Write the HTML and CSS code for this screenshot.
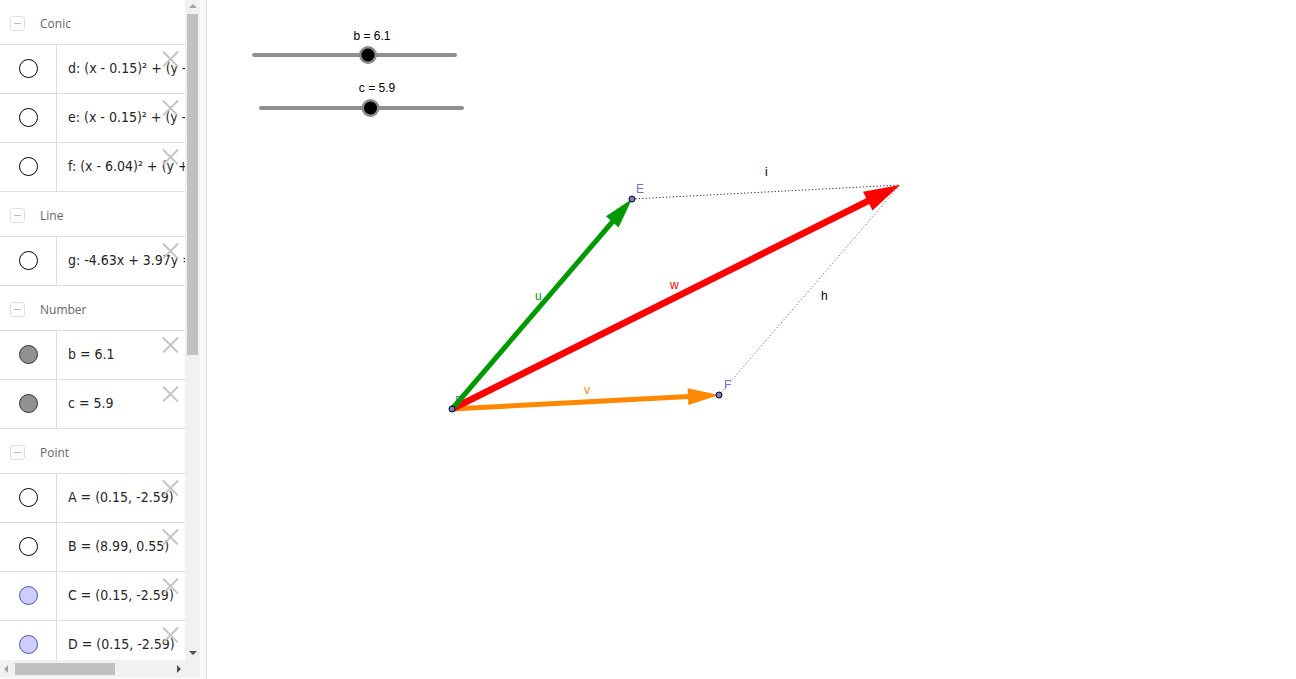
FILE: index.html
```html
<!DOCTYPE html>
<html>
<head>
<meta charset="utf-8">
<link rel="stylesheet" href="styles.css">
</head>
<body>
<div class="app">
  <div class="left">
    <div class="algebra-col">
      <div class="main">
        <div class="list">
          <div class="group"><span class="collapse"></span><span class="gname">Conic</span></div>
          <div class="item"><div class="mark"><span class="dot empty"></span></div><div class="expr">d: (x - 0.15)² + (y - 2.59)² = 10</div><span class="del"></span></div>
          <div class="item"><div class="mark"><span class="dot empty"></span></div><div class="expr">e: (x - 0.15)² + (y - 2.59)² = 10</div><span class="del"></span></div>
          <div class="item"><div class="mark"><span class="dot empty"></span></div><div class="expr">f: (x - 6.04)² + (y + 2.59)² = 10</div><span class="del"></span></div>
          <div class="group"><span class="collapse"></span><span class="gname">Line</span></div>
          <div class="item"><div class="mark"><span class="dot empty"></span></div><div class="expr">g: -4.63x + 3.97y = -11</div><span class="del"></span></div>
          <div class="group"><span class="collapse"></span><span class="gname">Number</span></div>
          <div class="item"><div class="mark"><span class="dot grey"></span></div><div class="expr">b = 6.1</div><span class="del"></span></div>
          <div class="item"><div class="mark"><span class="dot grey"></span></div><div class="expr">c = 5.9</div><span class="del"></span></div>
          <div class="group"><span class="collapse"></span><span class="gname">Point</span></div>
          <div class="item"><div class="mark"><span class="dot empty"></span></div><div class="expr">A = (0.15, -2.59)</div><span class="del"></span></div>
          <div class="item"><div class="mark"><span class="dot empty"></span></div><div class="expr">B = (8.99, 0.55)</div><span class="del"></span></div>
          <div class="item"><div class="mark"><span class="dot blue"></span></div><div class="expr">C = (0.15, -2.59)</div><span class="del"></span></div>
          <div class="item"><div class="mark"><span class="dot blue"></span></div><div class="expr">D = (0.15, -2.59)</div><span class="del"></span></div>
        </div>
        <div class="vscroll">
          <div class="arrow up"></div>
          <div class="vtrack"><div class="vthumb"></div></div>
          <div class="arrow down"></div>
        </div>
      </div>
      <div class="hrow">
        <div class="hscroll">
          <div class="arrow lefta"></div>
          <div class="htrack"><div class="hthumb"></div></div>
          <div class="arrow righta"></div>
        </div>
        <div class="corner"></div>
      </div>
    </div>
  </div>
  <div class="graphics">
    <svg class="canvas" width="1089" height="679" viewBox="207 0 1089 679">
      <!-- sliders -->
      <text class="slabel" x="372" y="40" text-anchor="middle">b = 6.1</text>
      <line x1="254" y1="55" x2="455" y2="55" class="sline"/>
      <circle cx="368" cy="55" r="9" fill="#8a8a8a"/>
      <circle cx="368" cy="55" r="6.5" fill="#000"/>
      <text class="slabel" x="377" y="92" text-anchor="middle">c = 5.9</text>
      <line x1="261" y1="108" x2="462" y2="108" class="sline"/>
      <circle cx="370.5" cy="108" r="9" fill="#8a8a8a"/>
      <circle cx="370.5" cy="108" r="6.5" fill="#000"/>

      <!-- D label -->
      <text class="plabel" x="455" y="405">D</text>

      <!-- dotted lines -->
      <line x1="632" y1="199" x2="900" y2="185" stroke="#222" stroke-width="1" stroke-dasharray="1.2 2.2"/>
      <line x1="719" y1="395" x2="900" y2="185" stroke="#666" stroke-width="1" stroke-dasharray="1.2 2.2"/>

      <!-- v orange -->
      <line x1="452" y1="409" x2="689" y2="396.5" stroke="#ff8800" stroke-width="5"/>
      <polygon points="719,395 688.4,405 687.6,388.3" fill="#ff8800"/>
      <!-- w red -->
      <line x1="452" y1="409" x2="869" y2="200.5" stroke="#ff0000" stroke-width="6.5"/>
      <polygon points="900,185 872.5,210.5 863,191.8" fill="#ff0000"/>
      <!-- u green -->
      <line x1="452" y1="409" x2="614" y2="220" stroke="#009900" stroke-width="5"/>
      <polygon points="632,199 618.6,227.5 606,216.3" fill="#009900"/>

      <!-- points -->
      <circle cx="452" cy="409" r="3" fill="#7b7bd6" stroke="#000" stroke-width="1"/>
      <circle cx="632" cy="199" r="3" fill="#7b7bd6" stroke="#000" stroke-width="1"/>
      <circle cx="719" cy="395" r="3" fill="#7b7bd6" stroke="#000" stroke-width="1"/>

      <!-- labels -->
      <text class="plabel" x="636" y="193">E</text>
      <text class="plabel" x="724" y="389">F</text>
      <text class="vlabel lbl-black" x="765" y="176">i</text>
      <text class="vlabel lbl-black" x="821" y="300">h</text>
      <text class="vlabel lbl-green" x="535" y="300">u</text>
      <text class="vlabel lbl-red" x="670" y="289">w</text>
      <text class="vlabel lbl-orange" x="584" y="394">v</text>
    </svg>
  </div>
</div>
</body>
</html>
```

FILE: styles.css
```css
html, body {
  margin: 0;
  padding: 0;
  background: #fff;
  overflow: hidden;
}
.app {
  display: flex;
  width: 1296px;
  height: 679px;
}
.left {
  width: 206px;
  height: 679px;
  background: #f8f8f8;
  border-right: 1px solid #dcdcdc;
  flex: none;
}
.algebra-col {
  width: 200px;
  height: 679px;
  display: flex;
  flex-direction: column;
}
.main {
  flex: 1;
  display: flex;
  min-height: 0;
}
.list {
  width: 185px;
  background: #fff;
  overflow: hidden;
  flex: none;
}
.group {
  height: 44px;
  border-bottom: 1px solid #dddddd;
  display: flex;
  align-items: center;
  box-sizing: content-box;
}
.collapse {
  width: 13px;
  height: 13px;
  border: 1px solid #dedede;
  border-radius: 3px;
  margin-left: 10px;
  margin-right: 15px;
  position: relative;
  margin-top: 2px;
}
.collapse::after {
  content: "";
  position: absolute;
  left: 3px;
  top: 6px;
  width: 7px;
  height: 1px;
  background: #b8b8b8;
}
.gname {
  font-family: "Open Sans", sans-serif;
  font-size: 12px;
  color: #666;
  margin-top: 2px;
}
.item {
  height: 48px;
  border-bottom: 1px solid #dddddd;
  display: flex;
  position: relative;
}
.mark {
  width: 56px;
  border-right: 1px solid #dddddd;
  display: flex;
  align-items: center;
  justify-content: center;
  flex: none;
}
.dot {
  width: 17px;
  height: 17px;
  border-radius: 50%;
  border: 1px solid #000;
  margin-left: 1px;
  margin-bottom: 1px;
}
.dot.empty { background: #fff; }
.dot.grey { background: #919191; border-color: #333; }
.dot.blue { background: #ccccff; border-color: #5050b0; }
.expr {
  padding-left: 11px;
  padding-bottom: 3px;
  display: flex;
  align-items: center;
  white-space: nowrap;
  font-family: "DejaVu Sans", sans-serif;
  font-stretch: condensed;
  font-size: 14px;
  color: #262626;
}
.del {
  position: absolute;
  right: 6px;
  top: 5px;
  width: 17px;
  height: 17px;
}
.del::before, .del::after {
  content: "";
  position: absolute;
  left: -2px;
  top: 8px;
  width: 21px;
  height: 1.5px;
  background: #c4c4c4;
  transform: rotate(45deg);
}
.del::after { transform: rotate(-45deg); }

.vscroll {
  width: 15px;
  background: #f1f1f1;
  display: flex;
  flex-direction: column;
  flex: none;
}
.arrow {
  position: relative;
  flex: none;
}
.arrow.up, .arrow.down { height: 14px; }
.arrow.up::after {
  content: "";
  position: absolute;
  left: 4px;
  top: 4px;
  border-left: 4px solid transparent;
  border-right: 4px solid transparent;
  border-bottom: 4px solid #a3a3a3;
}
.arrow.down::after {
  content: "";
  position: absolute;
  left: 4px;
  top: 5px;
  border-left: 4px solid transparent;
  border-right: 4px solid transparent;
  border-top: 4px solid #505050;
}
.vtrack {
  flex: 1;
  padding: 0 2px;
}
.vthumb {
  height: 341px;
  background: #c1c1c1;
}
.hrow {
  height: 17px;
  display: flex;
  flex: none;
  margin-bottom: 2px;
}
.hscroll {
  width: 185px;
  background: #f1f1f1;
  display: flex;
  flex: none;
}
.arrow.lefta, .arrow.righta { width: 14px; }
.arrow.lefta::after {
  content: "";
  position: absolute;
  left: 4px;
  top: 5px;
  border-top: 4px solid transparent;
  border-bottom: 4px solid transparent;
  border-right: 4px solid #a3a3a3;
}
.arrow.righta::after {
  content: "";
  position: absolute;
  left: 6px;
  top: 5px;
  border-top: 4px solid transparent;
  border-bottom: 4px solid transparent;
  border-left: 4px solid #505050;
}
.htrack {
  flex: 1;
  padding: 3px 0 2px 1px;
}
.hthumb {
  width: 100px;
  height: 12px;
  background: #c1c1c1;
}
.corner {
  width: 15px;
  background: #f1f1f1;
}
.graphics {
  flex: 1;
  background: #fff;
}
.canvas {
  display: block;
}
.sline {
  stroke: #8f8f8f;
  stroke-width: 4;
  stroke-linecap: round;
}
.slabel {
  font-family: "Liberation Sans", Arial, sans-serif;
  font-size: 12px;
  fill: #000;
}
.plabel {
  font-family: "Liberation Sans", Arial, sans-serif;
  font-size: 12px;
  fill: #7272c8;
}
.vlabel {
  font-family: "Liberation Sans", Arial, sans-serif;
  font-size: 12px;
}
.lbl-black { fill: #000; }
.lbl-green { fill: #009900; }
.lbl-red { fill: #ff0000; }
.lbl-orange { fill: #ff8800; }
```
